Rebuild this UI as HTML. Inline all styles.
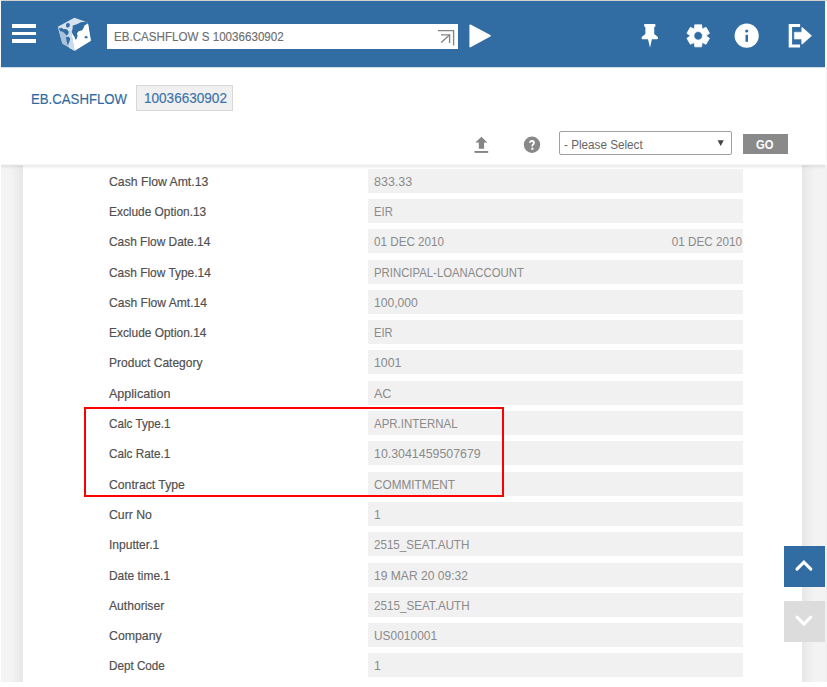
<!DOCTYPE html>
<html><head><meta charset="utf-8"><style>
html,body{margin:0;padding:0;width:827px;height:687px;overflow:hidden;background:#fff;position:relative;font-family:"Liberation Sans",sans-serif}
svg{position:absolute;overflow:visible}
#topline{position:absolute;left:1px;top:0;width:826px;height:1px;background:#d5d1cc}
#hdr{position:absolute;left:1px;top:1px;width:824px;height:66px;background:#316ca3;box-shadow:0 .7px .9px -.2px rgba(40,95,150,.45)}
.bar{position:absolute;left:12.4px;width:24px;background:#fff}
#search{position:absolute;left:106.7px;top:24.3px;width:351px;height:24.4px;background:#fff}
#search .t{position:absolute;left:7.3px;top:4.7px;-webkit-text-stroke:.15px #6e6e6e;font-size:13px;color:#6e6e6e;white-space:nowrap}
#search .c{transform:scaleX(.893)}
.c{display:inline-block;text-indent:0;transform:scaleX(.9);transform-origin:0 50%;white-space:nowrap}
#lgray{position:absolute;left:1px;top:165px;width:22px;height:517px;background:linear-gradient(to right,#f4f4f4 0,#f3f3f3 45%,#e7e7e7 100%)}
#rgray{position:absolute;left:802px;top:165px;width:25px;height:517px;background:linear-gradient(to right,#e7e7e7 0,#f3f3f3 50%,#f3f3f3 95%,#ededed 100%)}
#shadow{position:absolute;left:1px;top:163.5px;width:824px;height:5px;background:linear-gradient(rgba(0,0,0,0.02),rgba(0,0,0,0.075) 40%,rgba(0,0,0,0.03) 70%,rgba(0,0,0,0))}
.lab{position:absolute;left:109px;height:24px;line-height:26px;font-size:13.5px;color:#505050;-webkit-text-stroke:.2px #505050}
.box{position:absolute;left:367.5px;width:375px;height:24px;line-height:25px;background:#f1f1f1;font-size:13.5px;color:#8a8a8a;text-indent:6px}
#bc{position:absolute;left:31px;top:90px;font-size:15px;color:#2f6aa0;-webkit-text-stroke:.15px #2f6aa0}
#bc .c{transform:scaleX(.88)}
#bcbox{position:absolute;left:136px;top:85px;width:95px;height:24px;background:#f0f0f0;border:1px solid #d8d8d8;font-size:14.5px;color:#3b73a8;line-height:24px;text-indent:7px;-webkit-text-stroke:.15px #3b73a8}
#bcbox .c{transform:scaleX(.935)}
#sel{position:absolute;left:558.5px;top:131.2px;width:171px;height:21.6px;border:1px solid #a0a0a0;border-radius:2px;background:#fff;font-size:13px;color:#666;line-height:25px;text-indent:4px}
#go{position:absolute;left:742.5px;top:133.5px;width:45px;height:20.3px;background:#8a8a8a;color:#fff;font-weight:bold;font-size:12.5px;line-height:22px;text-align:center}
#go .c{transform:scaleX(.9);transform-origin:50% 50%}
#redbox{position:absolute;left:83.9px;top:407.4px;width:416.5px;height:85.4px;border:2.1px solid #ff0000}
#up{position:absolute;left:784px;top:545.5px;width:41px;height:41px;background:#316ca3}
#down{position:absolute;left:784px;top:600.5px;width:41px;height:41.5px;background:#dcdcdc}
</style></head><body>
<div id="topline"></div>
<div style="position:absolute;left:826px;top:67px;width:1px;height:98px;background:#f3f3f3"></div>
<div id="lgray"></div>
<div id="rgray"></div>
<div class="lab" style="top:168.6px"><span class="c" style="transform:scaleX(0.906)">Cash Flow Amt.13</span></div><div class="box" style="top:168.6px"><span class="c" style="transform:scaleX(0.925)">833.33</span></div>
<div class="lab" style="top:198.9px"><span class="c" style="transform:scaleX(0.881)">Exclude Option.13</span></div><div class="box" style="top:198.9px"><span class="c" style="transform:scaleX(0.834)">EIR</span></div>
<div class="lab" style="top:229.2px"><span class="c" style="transform:scaleX(0.882)">Cash Flow Date.14</span></div><div class="box" style="top:229.2px"><span class="c" style="transform:scaleX(0.864)">01 DEC 2010</span></div>
<div class="lab" style="top:259.5px"><span class="c" style="transform:scaleX(0.883)">Cash Flow Type.14</span></div><div class="box" style="top:259.5px"><span class="c" style="transform:scaleX(0.841)">PRINCIPAL-LOANACCOUNT</span></div>
<div class="lab" style="top:289.8px"><span class="c" style="transform:scaleX(0.894)">Cash Flow Amt.14</span></div><div class="box" style="top:289.8px"><span class="c" style="transform:scaleX(0.896)">100,000</span></div>
<div class="lab" style="top:320.1px"><span class="c" style="transform:scaleX(0.883)">Exclude Option.14</span></div><div class="box" style="top:320.1px"><span class="c" style="transform:scaleX(0.824)">EIR</span></div>
<div class="lab" style="top:350.4px"><span class="c" style="transform:scaleX(0.89)">Product Category</span></div><div class="box" style="top:350.4px"><span class="c" style="transform:scaleX(0.914)">1001</span></div>
<div class="lab" style="top:380.7px"><span class="c" style="transform:scaleX(0.929)">Application</span></div><div class="box" style="top:380.7px"><span class="c" style="transform:scaleX(0.93)">AC</span></div>
<div class="lab" style="top:411.0px"><span class="c" style="transform:scaleX(0.866)">Calc Type.1</span></div><div class="box" style="top:411.0px"><span class="c" style="transform:scaleX(0.851)">APR.INTERNAL</span></div>
<div class="lab" style="top:441.3px"><span class="c" style="transform:scaleX(0.87)">Calc Rate.1</span></div><div class="box" style="top:441.3px"><span class="c" style="transform:scaleX(0.917)">10.3041459507679</span></div>
<div class="lab" style="top:471.6px"><span class="c" style="transform:scaleX(0.905)">Contract Type</span></div><div class="box" style="top:471.6px"><span class="c" style="transform:scaleX(0.871)">COMMITMENT</span></div>
<div class="lab" style="top:501.9px"><span class="c" style="transform:scaleX(0.907)">Curr No</span></div><div class="box" style="top:501.9px"><span class="c" style="transform:scaleX(0.9)">1</span></div>
<div class="lab" style="top:532.2px"><span class="c" style="transform:scaleX(0.891)">Inputter.1</span></div><div class="box" style="top:532.2px"><span class="c" style="transform:scaleX(0.86)">2515_SEAT.AUTH</span></div>
<div class="lab" style="top:562.5px"><span class="c" style="transform:scaleX(0.884)">Date time.1</span></div><div class="box" style="top:562.5px"><span class="c" style="transform:scaleX(0.894)">19 MAR 20 09:32</span></div>
<div class="lab" style="top:592.8px"><span class="c" style="transform:scaleX(0.897)">Authoriser</span></div><div class="box" style="top:592.8px"><span class="c" style="transform:scaleX(0.863)">2515_SEAT.AUTH</span></div>
<div class="lab" style="top:623.1px"><span class="c" style="transform:scaleX(0.911)">Company</span></div><div class="box" style="top:623.1px"><span class="c" style="transform:scaleX(0.884)">US0010001</span></div>
<div class="lab" style="top:653.4px"><span class="c" style="transform:scaleX(0.865)">Dept Code</span></div><div class="box" style="top:653.4px"><span class="c" style="transform:scaleX(0.9)">1</span></div>
<div class="box" style="top:229.2px;background:transparent;text-align:right;text-indent:0;width:375px;left:367.5px"><span style="display:inline-block;transform:scaleX(.866);transform-origin:100% 50%;white-space:nowrap">01 DEC 2010</span></div>
<div id="redbox"></div>
<div id="shadow"></div>
<div id="hdr"></div>
<div class="bar" style="top:24.1px;height:4.2px"></div>
<div class="bar" style="top:31.7px;height:3.6px"></div>
<div class="bar" style="top:39.2px;height:3.8px"></div>
<div id="search"><div class="t"><span class="c">EB.CASHFLOW S 10036630902</span></div></div>
<!-- logo -->
<svg style="left:0;top:0" width="827" height="70" viewBox="0 0 827 70">
  <g transform="translate(56 16) scale(0.05241)">
  <polygon points="35,205 350,35 555,105 610,140 665,470 355,665 120,525" fill="#d6e2ee"/>
  <polygon points="290,300 610,140 665,470 355,665" fill="#ffffff"/>
  <polygon points="35,205 290,300 355,665 120,525" fill="#a9c2db"/>
  <polygon points="200,270 290,300 355,665 250,610" fill="#cddcea"/>
  <path d="M55,245 L110,225 L140,255 L180,250 L215,262 L242,300 L236,342 L205,372 L172,340 L130,302 L85,292Z" fill="#316ca3"/>
  <path d="M195,148 L240,130 L266,160 L252,210 L215,226 L190,196Z" fill="#316ca3"/>
  <path d="M188,405 L245,395 L272,432 L252,500 L226,556 L206,490Z" fill="#316ca3"/>
  <path d="M320,182 L370,165 L420,150 L470,118 L560,110 L612,138 L545,180 L522,232 L500,272 L432,292 L402,330 L342,312 L300,300 L318,240Z" fill="#316ca3"/>
  <path d="M300,300 L350,290 L400,322 L412,382 L392,440 L372,452 L350,392 L320,352Z" fill="#316ca3"/>
  <path d="M545,398 L575,376 L606,402 L600,426 L550,426Z" fill="#316ca3"/>
  </g>
  <!-- search arrow icon -->
  <g stroke="#858585" stroke-width="1.35" fill="none">
    <path d="M438,30.6 H453.6 V45.4"/>
    <path d="M441,34.8 H449.6 V42.9"/>
    <path d="M449.6,34.8 L441.2,42.6"/>
  </g>
  <!-- play -->
  <path d="M470.2,25.2 L490,35.8 L470.2,46.6Z" fill="#fff" stroke="#fff" stroke-width="1.6" stroke-linejoin="round"/>
  <!-- pin -->
  <g transform="translate(636,20)" fill="#fff">
    <path d="M8.6,4.1 H19 Q19.4,4.1 19.4,4.6 V6.2 Q19.4,6.7 18.6,6.9 L18.2,7 V14 L21.6,16.8 Q22,17.3 22,18.2 Q22,19.2 21,19.2 H15.9 L14,27.7 L12,19.2 H6.7 Q5.6,19.2 5.6,18.2 Q5.6,17.3 6,16.8 L9.4,14 V7 L9,6.9 Q8.2,6.7 8.2,6.2 V4.6 Q8.2,4.1 8.6,4.1Z"/>
  </g>
  <!-- gear -->
  <g transform="translate(686.2,23.8)">
    <path d="M8.24 3.93 L8.51 0.94 L15.49 0.94 L15.76 3.93 Q15.65 5.68 17.10 4.71 L19.84 3.45 L23.33 9.49 L20.87 11.22 Q19.30 12.00 20.87 12.78 L23.33 14.51 L19.84 20.55 L17.10 19.29 Q15.65 18.32 15.76 20.07 L15.49 23.06 L8.51 23.06 L8.24 20.07 Q8.35 18.32 6.90 19.29 L4.16 20.55 L0.67 14.51 L3.13 12.78 Q4.70 12.00 3.13 11.22 L0.67 9.49 L4.16 3.45 L6.90 4.71 Q8.35 5.68 8.24 3.93Z M12,7.75 A4.25,4.25 0 1,0 12,16.25 A4.25,4.25 0 1,0 12,7.75Z" fill="#fff" fill-rule="evenodd" stroke="#fff" stroke-width="0.7" stroke-linejoin="round"/>
  </g>
  <!-- info -->
  <circle cx="746.7" cy="35.7" r="12.1" fill="#fff"/>
  <circle cx="746.7" cy="31" r="1.6" fill="#316ca3"/>
  <rect x="745.5" y="34.8" width="2.5" height="7" fill="#316ca3"/>
  <!-- exit -->
  <path d="M788.7,24 H800.1 V27 H792.1 V44.5 H800.1 V47.5 H788.7Z" fill="#fff"/>
  <path d="M794.3,32.2 H801.7 V27.8 Q801.7,27.2 802.4,27.6 L811.6,35.8 L802.4,44 Q801.7,44.4 801.7,43.8 V39.1 H794.3Z" fill="#fff" stroke="#fff" stroke-width="0.5" stroke-linejoin="round"/>
</svg>
<div id="bc"><span class="c">EB.CASHFLOW</span></div>
<div id="bcbox"><span class="c">10036630902</span></div>
<div id="sel"><span class="c">- Please Select</span></div>
<div id="go"><span class="c">GO</span></div>
<svg style="left:0;top:120px" width="827" height="45" viewBox="0 120 827 45">
  <!-- upload -->
  <path d="M481.4,136.7 L487.4,142.6 H484.1 V148.7 H478.8 V142.6 H475.3Z" fill="#858585"/>
  <rect x="474.5" y="151" width="13.7" height="1.9" fill="#858585"/>
  <!-- question -->
  <circle cx="532" cy="144.7" r="8.2" fill="#888"/>
  <path d="M530,142.7 Q530,141 532,141 Q534,141 534,142.8 Q534,143.9 532.9,144.6 Q532.3,145 532.3,146.4" fill="none" stroke="#fff" stroke-width="1.8"/>
  <rect x="531.3" y="147.7" width="2.1" height="2.1" fill="#fff"/>
  <!-- select arrow -->
  <path d="M717.6,140.2 H723.8 L720.7,146Z" fill="#444"/>
</svg>
<div id="up"></div>
<div id="down"></div>
<svg style="left:0;top:540px" width="827" height="110" viewBox="0 540 827 110">
  <path d="M797,569.2 L803.9,562.2 L810.8,569.2" fill="none" stroke="#fff" stroke-width="3.1" stroke-linecap="round"/>
  <path d="M797,617.2 L803.9,624 L810.8,617.2" fill="none" stroke="#fff" stroke-width="3.1" stroke-linecap="round"/>
</svg>
</body></html>
